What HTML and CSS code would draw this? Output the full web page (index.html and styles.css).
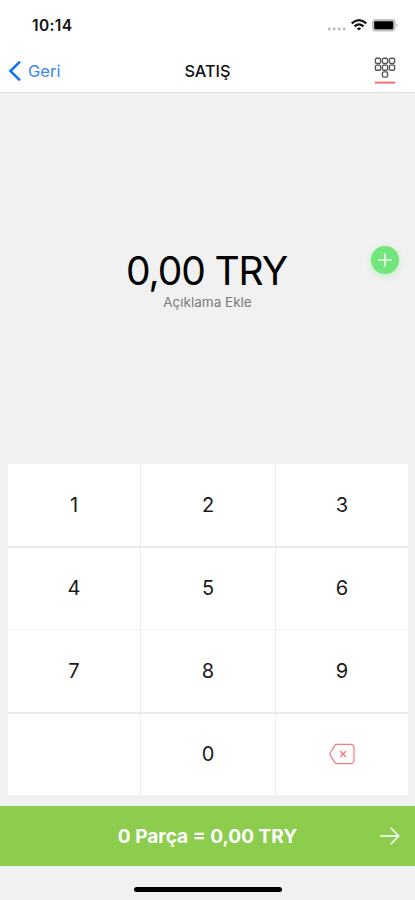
FILE: index.html
```html
<!DOCTYPE html>
<html lang="tr">
<head>
<meta charset="utf-8">
<meta name="viewport" content="width=device-width, initial-scale=1">
<title>Satış</title>
<link rel="stylesheet" href="styles.css">
</head>
<body>
<div class="screen">
  <header class="header">
    <div class="status">
      <span class="time">10:14</span>
      <svg class="status-icons" width="72" height="16" viewBox="0 0 72 16">
        <g fill="#b9b9b9"><circle cx="2.2" cy="12" r="1.4"/><circle cx="7.2" cy="12" r="1.4"/><circle cx="12.2" cy="12" r="1.4"/><circle cx="17.2" cy="12" r="1.4"/></g>
        <g fill="none" stroke="#111" stroke-width="2.1"><path d="M24.7 6.4Q32 0 39.3 6.4"/><path d="M27.5 9.4Q32 5.5 36.5 9.4"/></g>
        <path d="M29.7 11.3Q32 9.5 34.3 11.3L32 13.6Z" fill="#111"/>
        <rect x="45" y="2" width="23.6" height="12.4" rx="3.4" fill="#c2c2c2"/>
        <rect x="47.2" y="4.2" width="19" height="8" rx="1.2" fill="#000"/>
        <path d="M69.4 6.1Q71.8 8.2 69.4 10.3Z" fill="#bdbdbd"/>
      </svg>
    </div>
    <nav class="nav">
      <a class="back"><svg width="13" height="22" viewBox="0 0 13 22"><path d="M12 1.6L2.4 11L12 20.4" fill="none" stroke="#1471f3" stroke-width="2.5"/></svg><span>Geri</span></a>
      <h1 class="title">SATIŞ</h1>
      <span class="pad-tab">
        <svg width="22" height="28" viewBox="0 0 22 28" fill="none" stroke="#555" stroke-width="1.4">
          <rect x="1.4" y="1.3" width="5.2" height="5.2" rx="1.4"/><rect x="8.4" y="1.3" width="5.2" height="5.2" rx="1.4"/><rect x="15.4" y="1.3" width="5.2" height="5.2" rx="1.4"/>
          <rect x="1.4" y="8.1" width="5.2" height="5.2" rx="1.4"/><rect x="8.4" y="8.1" width="5.2" height="5.2" rx="1.4"/><rect x="15.4" y="8.1" width="5.2" height="5.2" rx="1.4"/>
          <rect x="8.4" y="14.9" width="5.2" height="5.2" rx="1.6"/>
          <path d="M.8 25.6H21.2" stroke="#f76e70" stroke-width="2"/>
        </svg>
      </span>
    </nav>
  </header>
  <main class="amount-area">
    <div class="amount">0,00 TRY</div>
    <div class="note">Açıklama Ekle</div>
    <button class="add" aria-label="Ekle"><svg width="14" height="14" viewBox="0 0 14 14"><path d="M7 .3V13.7M.3 7H13.7" stroke="#effff0" stroke-width="1.6"/></svg></button>
  </main>
  <section class="keypad">
    <div class="key">1</div><div class="key">2</div><div class="key">3</div>
    <div class="key strong">4</div><div class="key strong">5</div><div class="key strong">6</div>
    <div class="key">7</div><div class="key">8</div><div class="key">9</div>
    <div class="key strong"></div><div class="key strong">0</div>
    <div class="key strong"><svg width="26" height="22" viewBox="0 0 26 22" fill="none" stroke="#f87c7c" stroke-width="1.2"><path d="M7.8 1.3H21.5Q25 1.3 25 4.8V17.2Q25 20.7 21.5 20.7H7.8Q6.5 20.7 5.8 19.6L1.3 12.2Q.7 11 1.3 9.8L5.8 2.4Q6.5 1.3 7.8 1.3Z"/><path d="M11.2 8.1L17 13.9M17 8.1L11.2 13.9" stroke-width="1.4"/></svg></div>
  </section>
  <footer class="total">
    <span class="total-text">0 Parça = 0,00 TRY</span>
    <svg class="arrow" width="20" height="18" viewBox="0 0 20 18" fill="none" stroke="#fff" stroke-width="1.6"><path d="M0 9H18.8M10.6 .8L18.8 9L10.6 17.2"/></svg>
  </footer>
  <div class="home"></div>
</div>
</body>
</html>
```

FILE: styles.css
```css
* { box-sizing: border-box; }
body { margin: 0; background: #f1f1f1; font-family: Inter, "Liberation Sans", sans-serif; color: #000; }
.screen { width: 415px; height: 900px; display: flex; flex-direction: column; overflow: hidden; }
.header { height: 93px; background: #fff; border-bottom: 1px solid #dedede; }
.status { height: 50px; display: flex; justify-content: space-between; align-items: center; padding: 0 16px 0 32px; }
.time { font-size: 15.5px; font-weight: 600; letter-spacing: 0.35px; color: #111; }
.status-icons { display: block; }
.nav { height: 42px; display: grid; grid-template-columns: 1fr auto 1fr; align-items: center; padding: 0 19px 0 8px; }
.back { display: flex; align-items: center; gap: 7px; color: #3d86f6; font-size: 16.5px; }
.title { margin: 0 0 0 11px; font-size: 16.3px; line-height: 20px; font-weight: 500; color: #111; }
.pad-tab { display: flex; justify-content: flex-end; }
.amount-area { position: relative; height: 370px; padding-top: 154px; text-align: center; }
.amount { padding-right: 2px; font-size: 39px; line-height: 47px; letter-spacing: -1.1px; }
.note { font-size: 13.5px; line-height: 17px; color: #7b7b7b; }
.add { position: absolute; left: 371px; top: 153px; width: 28px; height: 28px; padding: 0; border: 0; border-radius: 50%; background: #72e67c; box-shadow: 0 2px 6px rgba(105, 235, 115, .4); display: flex; align-items: center; justify-content: center; }
.keypad { width: 400px; height: 332px; margin-left: 8px; display: grid; grid-template-columns: 132px 134px 132px; grid-template-rows: repeat(4, 83px); column-gap: 1px; background: #e7ecef; }
.key { background: #fff; border-top: 1px solid #f1f4f5; display: flex; align-items: center; justify-content: center; font-size: 20px; color: #1a1a1a; }
.key.strong { border-top: 2px solid #e7ebed; padding-bottom: 2px; }
.total { height: 60px; margin-top: 11px; background: #8ccd4e; color: #fff; display: grid; grid-template-columns: 1fr auto 1fr; align-items: center; padding-right: 15px; padding-left: 15px; }
.total-text { grid-column: 2; font-size: 19.1px; font-weight: 700; }
.arrow { justify-self: end; }
.home { width: 148px; height: 5px; margin: 21px 0 0 134px; border-radius: 3px; background: #000; }
```
